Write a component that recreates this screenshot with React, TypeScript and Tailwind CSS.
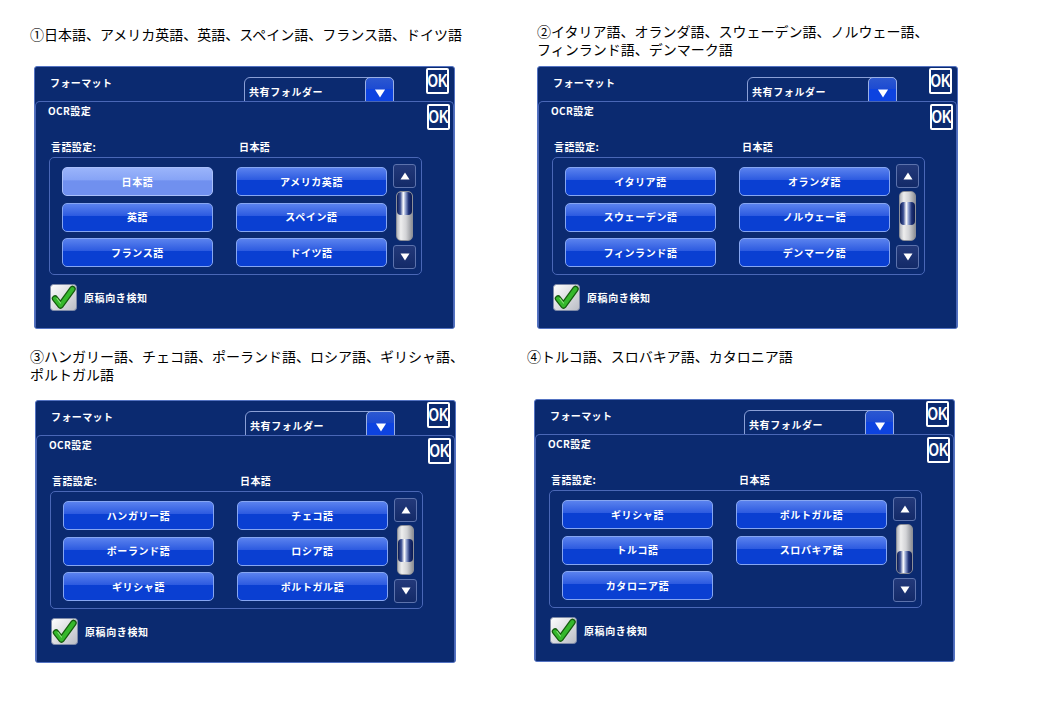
import React from "react";

type PanelData = {
  caption: string[];
  langs: string[];
  selected?: string;
  thumb: string;
  wrap: string;
  head: string;
  panel: string;
};

const panels: PanelData[] = [
  {
    caption: ["①日本語、アメリカ英語、英語、スペイン語、フランス語、ドイツ語"],
    langs: ["日本語", "アメリカ英語", "英語", "スペイン語", "フランス語", "ドイツ語"],
    selected: "日本語",
    thumb: "mt-0",
    wrap: "",
    head: "h-[44px] pt-[3px]",
    panel: "ml-[4px]",
  },
  {
    caption: ["②イタリア語、オランダ語、スウェーデン語、ノルウェー語、", "フィンランド語、デンマーク語"],
    langs: ["イタリア語", "オランダ語", "スウェーデン語", "ノルウェー語", "フィンランド語", "デンマーク語"],
    thumb: "mt-[10px]",
    wrap: "",
    head: "h-[44px]",
    panel: "",
  },
  {
    caption: ["③ハンガリー語、チェコ語、ポーランド語、ロシア語、ギリシャ語、", "ポルトガル語"],
    langs: ["ハンガリー語", "チェコ語", "ポーランド語", "ロシア語", "ギリシャ語", "ポルトガル語"],
    thumb: "mt-[13px]",
    wrap: "",
    head: "h-[53px]",
    panel: "ml-[5px]",
  },
  {
    caption: ["④トルコ語、スロバキア語、カタロニア語"],
    langs: ["ギリシャ語", "ポルトガル語", "トルコ語", "スロバキア語", "カタロニア語"],
    thumb: "mt-[26px]",
    wrap: "-ml-[10px]",
    head: "h-[52px]",
    panel: "ml-[7px]",
  },
];

const OkButton = () => (
  <div className="w-[23px] h-[26px] border-2 border-white rounded-[2px] bg-[#0b2a70] flex items-center justify-center overflow-hidden">
    <span className="inline-block scale-x-75 text-[18px] leading-none font-bold text-white font-['Liberation_Sans',Arial,sans-serif]">
      OK
    </span>
  </div>
);

const Triangle = ({ up, big }: { up?: boolean; big?: boolean }) => (
  <svg width={big ? 12 : 10} height={big ? 9 : 8} viewBox="0 0 10 8">
    <polygon points={up ? "5,0.5 9.5,7.5 0.5,7.5" : "0.5,0.5 9.5,0.5 5,7.5"} fill="#ffffff" />
  </svg>
);

const ScrollButton = ({ up }: { up?: boolean }) => (
  <div className="w-[23px] h-[24px] rounded-[3px] border border-[#5c72ac] bg-[linear-gradient(to_bottom,#23397a_0%,#132a68_100%)] flex items-center justify-center">
    <Triangle up={up} />
  </div>
);

const CheckBox = () => (
  <svg width="27" height="27" viewBox="0 0 27 27">
    <defs>
      <linearGradient id="cbg" x1="0" y1="0" x2="1" y2="1">
        <stop offset="0" stopColor="#ffffff" />
        <stop offset="1" stopColor="#b9bcc4" />
      </linearGradient>
    </defs>
    <rect x="0.5" y="0.5" width="26" height="26" rx="3" fill="url(#cbg)" stroke="#7e8aa8" />
    <path d="M5 14.5 L10.5 21.5 L22.5 5" fill="none" stroke="#155c0e" strokeWidth="6.5" strokeLinecap="round" strokeLinejoin="round" />
    <path d="M5 14.5 L10.5 21.5 L22.5 5" fill="none" stroke="#35b82c" strokeWidth="4" strokeLinecap="round" strokeLinejoin="round" />
    <path d="M7 14.5 L10.5 19" fill="none" stroke="#8ee07e" strokeWidth="1.2" strokeLinecap="round" />
  </svg>
);

const LangButton = ({ label, active }: { label: string; active?: boolean }) => (
  <div
    className={
      active
        ? "h-[29px] rounded-[5px] border border-[#a9bffa] bg-[linear-gradient(to_bottom,#9ab4fa_0%,#86a3f6_45%,#7090ef_47%,#7090ef_100%)] flex items-center justify-center"
        : "h-[29px] rounded-[5px] border border-[#86a6f2] bg-[linear-gradient(to_bottom,#5a82ee_0%,#2c5ae0_44%,#0a3fd2_46%,#0a3fd2_100%)] flex items-center justify-center"
    }
  >
    <span className="text-[10px] font-bold text-white tracking-[0.6px] leading-none">{label}</span>
  </div>
);

const Panel = ({ data }: { data: PanelData }) => (
  <div
    className={`w-[421px] h-[263px] bg-[#0b2a70] border border-[#5473c2] rounded-[3px] flex flex-col overflow-hidden font-['Noto_Sans_CJK_JP',sans-serif] ${data.panel}`}
  >
    {/* format row */}
    <div className="h-[34px] flex items-start overflow-hidden shrink-0">
      <div className="w-[209px] pl-[15px] pt-[10px] text-[10px] leading-[12px] font-bold text-white tracking-[0.4px]">
        フォーマット
      </div>
      <div className="w-[150px] h-[30px] mt-[10px] border border-[#8a9fd6] rounded-t-[6px] flex">
        <div className="flex-1 pl-[4px] pt-[8px] text-[10px] leading-[12px] font-bold text-white tracking-[0.6px]">
          共有フォルダー
        </div>
        <div className="w-[29px] h-[30px] -mt-px -mr-px rounded-t-[5px] border border-[#9ab0e6] bg-[linear-gradient(to_bottom,#2c58d0_0%,#1c4ad2_40%,#0d43e0_41%,#0d43e0_100%)] flex justify-center pt-[11px]">
          <Triangle big />
        </div>
      </div>
      <div className="ml-[32px] mt-[1px]">
        <OkButton />
      </div>
    </div>

    {/* OCR panel */}
    <div className="flex-1 border-t border-x border-[#4a67b6] rounded-t-[5px] flex flex-col">
      <div className="h-[34px] flex items-start shrink-0">
        <div className="pl-[12px] pt-[3px] text-[10px] leading-[12px] font-bold text-white tracking-[0.4px]">
          OCR設定
        </div>
        <div className="ml-auto mr-[3px] mt-[2px]">
          <OkButton />
        </div>
      </div>
      <div className="mt-[5px] h-[12px] flex text-[10px] leading-[12px] font-bold text-white tracking-[0.4px]">
        <div className="w-[203px] pl-[15px]">言語設定:</div>
        <div>日本語</div>
      </div>
      <div className="mt-[4px] ml-[13px] w-[373px] h-[118px] border border-[#4a67b6] rounded-[5px] flex items-start pl-[12px] pt-[9px]">
        <div className="grid grid-cols-[151px_151px] gap-x-[23px] gap-y-[6.5px]">
          {data.langs.map((l) => (
            <LangButton key={l} label={l} active={l === data.selected} />
          ))}
        </div>
        <div className="ml-[6px] -mt-[3px] flex flex-col items-center">
          <ScrollButton up />
          <div className="mt-[3px] w-[17px] h-[50px] rounded-[5px] border border-[#8c8f98] overflow-hidden bg-[linear-gradient(to_right,#b4b7be_0%,#eeeeee_25%,#d2d3d6_60%,#909298_100%)]">
            <div
              className={`h-[23px] rounded-[4px] bg-[linear-gradient(to_right,#0a1a52_0%,#3b4f92_22%,#ffffff_42%,#8b9ccc_58%,#1c2f74_78%,#0a1a50_100%)] ${data.thumb}`}
            />
          </div>
          <div className="mt-[4px]">
            <ScrollButton />
          </div>
        </div>
      </div>
      <div className="mt-[9px] ml-[14px] flex items-center gap-[7px]">
        <CheckBox />
        <span className="text-[10px] font-bold text-white tracking-[0.6px]">原稿向き検知</span>
      </div>
    </div>
  </div>
);

export default function App() {
  return (
    <div className="w-[1040px] h-[720px] bg-white pt-[22px] pl-[30px]">
      <div className="grid grid-cols-[507px_460px] gap-y-[18px]">
        {panels.map((p, i) => (
          <div key={i} className={`flex flex-col ${p.wrap}`}>
            <div className={`${p.head} text-[14px] leading-[18px] text-black font-['Noto_Sans_CJK_JP',sans-serif] whitespace-nowrap`}>
              {p.caption.map((c) => (
                <div key={c}>{c}</div>
              ))}
            </div>
            <Panel data={p} />
          </div>
        ))}
      </div>
    </div>
  );
}
